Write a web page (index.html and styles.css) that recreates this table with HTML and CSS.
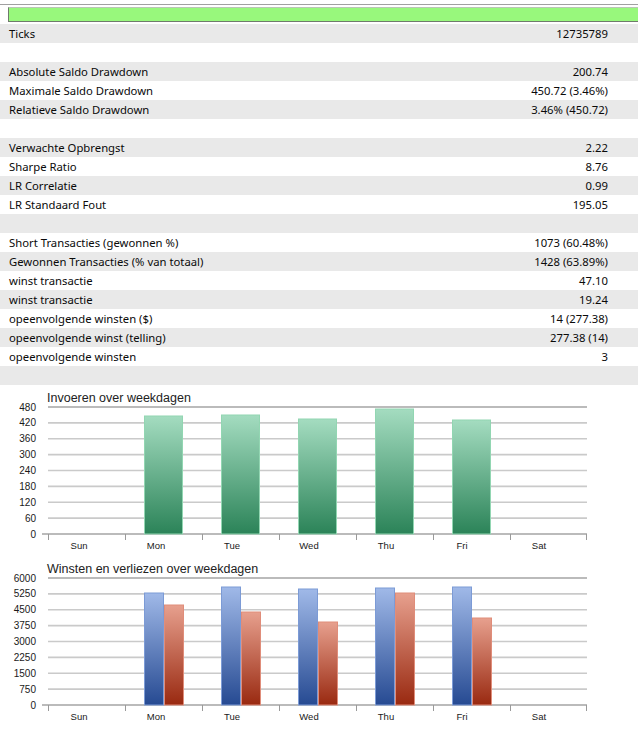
FILE: index.html
```html
<!DOCTYPE html>
<html>
<head>
<meta charset="utf-8">
<link rel="stylesheet" href="styles.css">
</head>
<body>
<div class="top">
  <div class="rule"></div>
  <div class="progress"></div>
</div>
<div class="table">
  <div class="row"><span>Ticks</span><span>12735789</span></div>
  <div class="row"><span></span><span></span></div>
  <div class="row"><span>Absolute Saldo Drawdown</span><span>200.74</span></div>
  <div class="row"><span>Maximale Saldo Drawdown</span><span>450.72 (3.46%)</span></div>
  <div class="row"><span>Relatieve Saldo Drawdown</span><span>3.46% (450.72)</span></div>
  <div class="row"><span></span><span></span></div>
  <div class="row"><span>Verwachte Opbrengst</span><span>2.22</span></div>
  <div class="row"><span>Sharpe Ratio</span><span>8.76</span></div>
  <div class="row"><span>LR Correlatie</span><span>0.99</span></div>
  <div class="row"><span>LR Standaard Fout</span><span>195.05</span></div>
  <div class="row"><span></span><span></span></div>
  <div class="row"><span>Short Transacties (gewonnen %)</span><span>1073 (60.48%)</span></div>
  <div class="row"><span>Gewonnen Transacties (% van totaal)</span><span>1428 (63.89%)</span></div>
  <div class="row"><span>winst transactie</span><span>47.10</span></div>
  <div class="row"><span>winst transactie</span><span>19.24</span></div>
  <div class="row"><span>opeenvolgende winsten ($)</span><span>14 (277.38)</span></div>
  <div class="row"><span>opeenvolgende winst (telling)</span><span>277.38 (14)</span></div>
  <div class="row"><span>opeenvolgende winsten</span><span>3</span></div>
  <div class="row"><span></span><span></span></div>
</div>

<svg class="chart chart1" width="638" height="170" viewBox="0 0 638 170">
  <defs>
    <linearGradient id="gGreen" x1="0" y1="0" x2="0" y2="1">
      <stop offset="0" stop-color="#a4dcc0"/>
      <stop offset="1" stop-color="#2b8358"/>
    </linearGradient>
  </defs>
  <text class="title" x="47" y="17">Invoeren over weekdagen</text>
  <g class="grid">
    <line x1="48" x2="587" y1="22" y2="22" class="edge"/>
    <line x1="48" x2="587" y1="37.9" y2="37.9"/>
    <line x1="48" x2="587" y1="53.8" y2="53.8"/>
    <line x1="48" x2="587" y1="69.6" y2="69.6"/>
    <line x1="48" x2="587" y1="85.5" y2="85.5"/>
    <line x1="48" x2="587" y1="101.4" y2="101.4"/>
    <line x1="48" x2="587" y1="117.3" y2="117.3"/>
    <line x1="48" x2="587" y1="133.1" y2="133.1"/>
    <line x1="42" x2="587" y1="149" y2="149" class="edge"/>
  </g>
  <g class="ticks">
    <line x1="48.5" x2="48.5" y1="149" y2="155"/>
    <line x1="125.5" x2="125.5" y1="149" y2="155"/>
    <line x1="202.5" x2="202.5" y1="149" y2="155"/>
    <line x1="279.5" x2="279.5" y1="149" y2="155"/>
    <line x1="356.5" x2="356.5" y1="149" y2="155"/>
    <line x1="433.5" x2="433.5" y1="149" y2="155"/>
    <line x1="510.5" x2="510.5" y1="149" y2="155"/>
    <line x1="586.5" x2="586.5" y1="149" y2="155"/>
  </g>
  <g class="ylab">
    <text x="36" y="25.5">480</text>
    <text x="36" y="41.4">420</text>
    <text x="36" y="57.3">360</text>
    <text x="36" y="73.1">300</text>
    <text x="36" y="89">240</text>
    <text x="36" y="104.9">180</text>
    <text x="36" y="120.8">120</text>
    <text x="36" y="136.6">60</text>
    <text x="36" y="152.5">0</text>
  </g>
  <g class="bars green">
    <rect x="144.5" y="31" width="38" height="118"/>
    <rect x="221.5" y="30" width="38" height="119"/>
    <rect x="298.5" y="34" width="38" height="115"/>
    <rect x="375.5" y="24" width="38" height="125"/>
    <rect x="452.5" y="35" width="38" height="114"/>
  </g>
  <g class="xlab">
    <text x="79" y="164">Sun</text>
    <text x="156" y="164">Mon</text>
    <text x="232" y="164">Tue</text>
    <text x="309" y="164">Wed</text>
    <text x="386" y="164">Thu</text>
    <text x="462" y="164">Fri</text>
    <text x="539" y="164">Sat</text>
  </g>
</svg>

<svg class="chart chart2" width="638" height="188" viewBox="0 0 638 188">
  <defs>
    <linearGradient id="gBlue" x1="0" y1="0" x2="0" y2="1">
      <stop offset="0" stop-color="#a0b9e8"/>
      <stop offset="1" stop-color="#264a92"/>
    </linearGradient>
    <linearGradient id="gRed" x1="0" y1="0" x2="0" y2="1">
      <stop offset="0" stop-color="#e7a08e"/>
      <stop offset="1" stop-color="#992910"/>
    </linearGradient>
  </defs>
  <text class="title" x="47" y="18">Winsten en verliezen over weekdagen</text>
  <g class="grid">
    <line x1="48" x2="587" y1="23" y2="23" class="edge"/>
    <line x1="48" x2="587" y1="38.9" y2="38.9"/>
    <line x1="48" x2="587" y1="54.8" y2="54.8"/>
    <line x1="48" x2="587" y1="70.6" y2="70.6"/>
    <line x1="48" x2="587" y1="86.5" y2="86.5"/>
    <line x1="48" x2="587" y1="102.4" y2="102.4"/>
    <line x1="48" x2="587" y1="118.3" y2="118.3"/>
    <line x1="48" x2="587" y1="134.1" y2="134.1"/>
    <line x1="42" x2="587" y1="150" y2="150" class="edge"/>
  </g>
  <g class="ticks">
    <line x1="48.5" x2="48.5" y1="150" y2="156"/>
    <line x1="125.5" x2="125.5" y1="150" y2="156"/>
    <line x1="202.5" x2="202.5" y1="150" y2="156"/>
    <line x1="279.5" x2="279.5" y1="150" y2="156"/>
    <line x1="356.5" x2="356.5" y1="150" y2="156"/>
    <line x1="433.5" x2="433.5" y1="150" y2="156"/>
    <line x1="510.5" x2="510.5" y1="150" y2="156"/>
    <line x1="586.5" x2="586.5" y1="150" y2="156"/>
  </g>
  <g class="ylab">
    <text x="36" y="26.5">6000</text>
    <text x="36" y="42.4">5250</text>
    <text x="36" y="58.3">4500</text>
    <text x="36" y="74.1">3750</text>
    <text x="36" y="90">3000</text>
    <text x="36" y="105.9">2250</text>
    <text x="36" y="121.8">1500</text>
    <text x="36" y="137.6">750</text>
    <text x="36" y="153.5">0</text>
  </g>
  <g class="bars blue">
    <rect x="144.5" y="38" width="19" height="112"/>
    <rect x="221.5" y="32" width="19" height="118"/>
    <rect x="298.5" y="34" width="19" height="116"/>
    <rect x="375.5" y="33" width="19" height="117"/>
    <rect x="452.5" y="32" width="19" height="118"/>
  </g>
  <g class="bars red">
    <rect x="164.5" y="50" width="19" height="100"/>
    <rect x="241.5" y="57" width="19" height="93"/>
    <rect x="318.5" y="67" width="19" height="83"/>
    <rect x="395.5" y="38" width="19" height="112"/>
    <rect x="472.5" y="63" width="19" height="87"/>
  </g>
  <g class="xlab">
    <text x="79" y="165">Sun</text>
    <text x="156" y="165">Mon</text>
    <text x="232" y="165">Tue</text>
    <text x="309" y="165">Wed</text>
    <text x="386" y="165">Thu</text>
    <text x="462" y="165">Fri</text>
    <text x="539" y="165">Sat</text>
  </g>
</svg>
</body>
</html>
```
FILE: styles.css
```css
html, body {
  margin: 0;
  padding: 0;
  background: #ffffff;
}
body {
  width: 638px;
  height: 743px;
  overflow: hidden;
  font-family: "Noto Sans", "Open Sans", sans-serif;
  color: #0a0a0a;
}
.top {
  padding-top: 4px;
  height: 20px;
}
.rule {
  height: 1px;
  background: #a0a0a0;
}
.progress {
  margin: 2px 0 0 8px;
  height: 13px;
  background: #98f87c;
  border-left: 1px solid #6f7a6c;
  border-bottom: 1px solid #6f7a6c;
  border-top: 1px solid #b9c6b4;
}
.table {
  display: flex;
  flex-direction: column;
}
.row {
  height: 19px;
  display: flex;
  justify-content: space-between;
  align-items: center;
  padding: 0 30px 0 9px;
  font-size: 11.3px;
  line-height: 19px;
  white-space: nowrap;
}
.row:nth-child(odd) {
  background: #e9e9e9;
}
.chart {
  display: block;
}
.chart text {
  font-family: "Liberation Sans", Arial, sans-serif;
  fill: #1a1a1a;
}
.chart .title {
  font-size: 12.5px;
  fill: #222222;
}
.grid line {
  stroke: #cacaca;
  stroke-width: 1.6;
}
.grid line.edge {
  stroke: #a4a4a4;
  stroke-width: 1.4;
}
.ticks line {
  stroke: #9a9a9a;
  stroke-width: 1;
}
.ylab text {
  font-size: 10px;
  text-anchor: end;
}
.xlab text {
  font-size: 9.5px;
  text-anchor: middle;
}
.bars rect {
  stroke-width: 1;
}
.bars.green rect {
  fill: url(#gGreen);
  stroke: #92d6b2;
}
.bars.blue rect {
  fill: url(#gBlue);
  stroke: #7c9bd6;
}
.bars.red rect {
  fill: url(#gRed);
  stroke: #e08d7a;
}
```
